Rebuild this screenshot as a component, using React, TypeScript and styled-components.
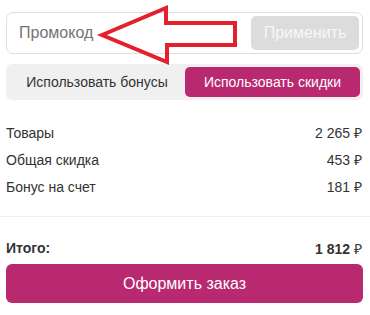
import React from "react";
import styled, { createGlobalStyle } from "styled-components";

const Global = createGlobalStyle`
  html, body { margin: 0; padding: 0; background: #fff; }
  body { font-family: "Liberation Sans", Arial, sans-serif; color: #333; }
`;

const Page = styled.div`
  width: 357px;
  margin-left: 6px;
  padding-top: 12px;
  position: relative;
`;

const PromoBox = styled.div`
  box-sizing: border-box;
  height: 42px;
  border: 1px solid #dedede;
  border-radius: 7px;
  display: flex;
  align-items: center;
  justify-content: space-between;
  padding: 0 3px 0 12px;
`;

const PromoInput = styled.div`
  font-size: 16px;
  color: #737373;
`;

const ApplyButton = styled.div`
  width: 108px;
  height: 34px;
  border-radius: 5px;
  background: #dcdcdc;
  color: #f7f7f7;
  font-size: 16px;
  display: flex;
  align-items: center;
  justify-content: center;
`;

const Segmented = styled.div`
  margin-top: 10px;
  height: 36px;
  box-sizing: border-box;
  background: #f0f0f0;
  border-radius: 6px;
  padding: 3px;
  display: grid;
  grid-template-columns: 176px 175px;
`;

const Segment = styled.div<{ $active?: boolean }>`
  display: flex;
  align-items: center;
  justify-content: center;
  font-size: 14px;
  border-radius: 5px;
  color: ${(p) => (p.$active ? "#fff" : "#333")};
  background: ${(p) => (p.$active ? "#b8296f" : "transparent")};
`;

const Rows = styled.div`
  margin-top: 19px;
`;

const Row = styled.div<{ $bold?: boolean }>`
  display: flex;
  justify-content: space-between;
  align-items: center;
  height: ${(p) => (p.$bold ? "20px" : "27px")};
  font-size: 14px;
  font-weight: ${(p) => (p.$bold ? 700 : 400)};
  color: #333;
  padding-right: 1px;
`;

const Divider = styled.div`
  margin-top: 16px;
  height: 1px;
  background: #efefef;
  margin-left: -6px;
  margin-right: -7px;
`;

const TotalWrap = styled.div`
  margin-top: 21px;
`;

const Rub = styled.span`
  font-weight: 400;
`;

const OrderButton = styled.div`
  margin-top: 6px;
  height: 39px;
  border-radius: 6px;
  background: #b8296f;
  color: #fff;
  font-size: 16px;
  display: flex;
  align-items: center;
  justify-content: center;
`;

const ArrowSvg = styled.svg`
  position: absolute;
  left: -6px;
  top: 0;
  pointer-events: none;
`;

export default function App() {
  return (
    <>
      <Global />
      <Page>
        <PromoBox>
          <PromoInput>Промокод</PromoInput>
          <ApplyButton>Применить</ApplyButton>
        </PromoBox>
        <Segmented>
          <Segment>Использовать бонусы</Segment>
          <Segment $active>Использовать скидки</Segment>
        </Segmented>
        <Rows>
          <Row>
            <span>Товары</span>
            <span>2 265 ₽</span>
          </Row>
          <Row>
            <span>Общая скидка</span>
            <span>453 ₽</span>
          </Row>
          <Row>
            <span>Бонус на счет</span>
            <span>181 ₽</span>
          </Row>
        </Rows>
        <Divider />
        <TotalWrap>
          <Row $bold>
            <span>Итого:</span>
            <span>
              1 812 <Rub>₽</Rub>
            </span>
          </Row>
        </TotalWrap>
        <OrderButton>Оформить заказ</OrderButton>
        <ArrowSvg width="370" height="80" viewBox="0 0 370 80">
          <polygon
            points="102,35 166,8 166,23 235,23 235,45 167,45 167,62"
            fill="none"
            stroke="#e3202b"
            strokeWidth="4"
            strokeLinejoin="miter"
            strokeMiterlimit="10"
          />
        </ArrowSvg>
      </Page>
    </>
  );
}
